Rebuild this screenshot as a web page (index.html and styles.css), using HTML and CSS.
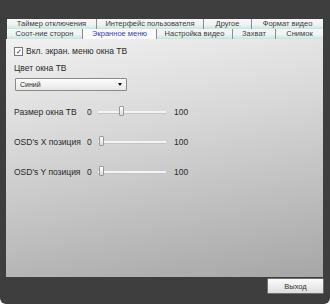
FILE: index.html
```html
<!DOCTYPE html>
<html lang="ru">
<head>
  <meta charset="UTF-8">
  <title>Настройки</title>
  <link rel="stylesheet" href="styles.css">
</head>
<body>
  <div class="window">
    <div class="tabs">
      <div class="tab-row">
        <div class="tab w90">Таймер отключения</div>
        <div class="tab w107">Интерфейс пользователя</div>
        <div class="tab w48">Другое</div>
        <div class="tab w71 last">Формат видео</div>
      </div>
      <div class="tab-row">
        <div class="tab w76">Соот-ние сторон</div>
        <div class="tab w74 active">Экранное меню</div>
        <div class="tab w76">Настройка видео</div>
        <div class="tab w43">Захват</div>
        <div class="tab w47 last">Снимок</div>
      </div>
    </div>

    <div class="panel">
      <label class="check-row">
        <span class="checkbox">&#10003;</span>
        Вкл. экран. меню окна ТВ
      </label>

      <div class="field-label">Цвет окна ТВ</div>
      <div class="select">
        <span>Синий</span>
        <span class="arrow"></span>
      </div>

      <div class="slider-row first">
        <span class="slider-label">Размер окна ТВ</span>
        <span class="min">0</span>
        <div class="track"><span class="thumb" style="left: 21px"></span></div>
        <span class="max">100</span>
      </div>
      <div class="slider-row">
        <span class="slider-label">OSD's X позиция</span>
        <span class="min">0</span>
        <div class="track"><span class="thumb" style="left: 1px"></span></div>
        <span class="max">100</span>
      </div>
      <div class="slider-row">
        <span class="slider-label">OSD's Y позиция</span>
        <span class="min">0</span>
        <div class="track"><span class="thumb" style="left: 1px"></span></div>
        <span class="max">100</span>
      </div>
    </div>

    <div class="footer">
      <button class="exit">Выход</button>
    </div>
  </div>
</body>
</html>
```

FILE: styles.css
```css
body {
  margin: 0;
  background-color: #fff;
  font-family: "Liberation Sans", Arial, sans-serif;
}

.window {
  width: 330px;
  height: 304px;
  box-sizing: border-box;
  padding-top: 19px;
  background-color: #3e3e3e;
  border-radius: 0 0 6px 6px;
  display: flex;
  flex-direction: column;
}

.tabs {
  margin: 0 7px 0 7px;
}

.tab-row {
  display: flex;
  height: 10px;
}

.tab {
  box-sizing: border-box;
  height: 10px;
  font-size: 7.5px;
  line-height: 10px;
  color: #3a3a3a;
  text-align: center;
  white-space: nowrap;
  overflow: hidden;
  background: linear-gradient(#f6f6f6, #eef4f3 55%, #c9e4e1);
  border-right: 1px solid #8d8d8d;
}

.tab.last {
  border-right: none;
}

.tab.active {
  background: #fbfbfb;
  color: #2a3fc0;
}

.w90 { width: 90px; }
.w107 { width: 107px; }
.w48 { width: 48px; }
.w71 { width: 71px; }
.w76 { width: 76px; }
.w74 { width: 74px; }
.w43 { width: 43px; }
.w47 { width: 47px; }

.panel {
  margin: 0 7px 0 6px;
  height: 238px;
  box-sizing: border-box;
  padding: 7px 8px;
  background: linear-gradient(170deg, #f1f1f1 0%, #d6d6d6 40%, #a6a6a6 100%);
  font-size: 8.5px;
  color: #2a2a2a;
}

.check-row {
  display: flex;
  align-items: center;
  gap: 3px;
  height: 10px;
}

.checkbox {
  width: 7px;
  height: 7px;
  border: 1px solid #777;
  background: #fff;
  font-size: 7px;
  line-height: 7px;
  text-align: center;
  color: #222;
}

.field-label {
  margin-top: 7px;
}

.select {
  margin-top: 5px;
  margin-left: 1px;
  width: 112px;
  height: 13px;
  box-sizing: border-box;
  border: 1px solid #8a8a8a;
  border-radius: 1px;
  background: linear-gradient(#fdfdfd, #e6e6e6);
  display: flex;
  align-items: center;
  justify-content: space-between;
  padding: 0 4px;
  font-size: 7px;
}

.arrow {
  width: 0;
  height: 0;
  border-left: 2.5px solid transparent;
  border-right: 2.5px solid transparent;
  border-top: 3px solid #111;
}

.slider-row {
  display: flex;
  align-items: center;
  height: 12px;
  margin-top: 18px;
}

.slider-row.first {
  margin-top: 15px;
}

.slider-label {
  width: 73px;
}

.min {
  width: 11px;
}

.track {
  position: relative;
  width: 68px;
  height: 2px;
  background: #f4f4f4;
  border-bottom: 1px solid #c4c4c4;
}

.thumb {
  position: absolute;
  top: -5px;
  width: 5px;
  height: 10px;
  box-sizing: border-box;
  border: 1px solid #999;
  border-radius: 1px;
  background: linear-gradient(#fff, #dcdcdc);
}

.max {
  margin-left: 8px;
}

.footer {
  display: flex;
  justify-content: flex-end;
  padding: 1px 6px 0 0;
}

.exit {
  width: 57px;
  height: 16px;
  padding: 0;
  border: 1px solid #707070;
  border-radius: 1px;
  background: linear-gradient(#fbfbfb, #dedede);
  font-family: "Liberation Sans", Arial, sans-serif;
  font-size: 7.5px;
  color: #333;
}
```
